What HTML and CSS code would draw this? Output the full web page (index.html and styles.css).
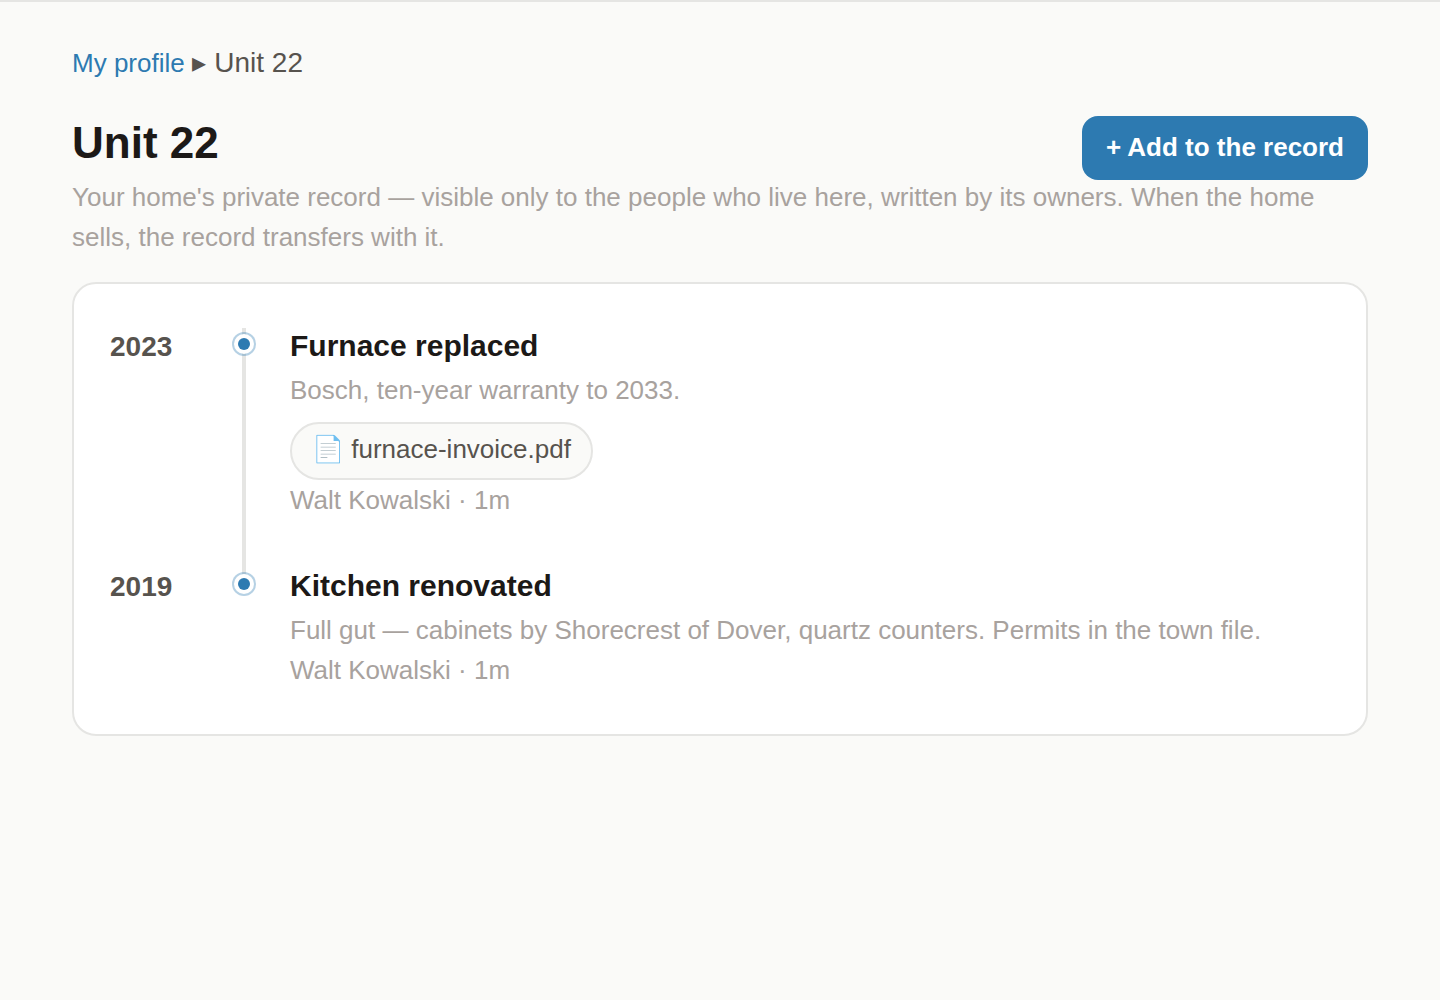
FILE: index.html
```html
<!DOCTYPE html>
<html lang="en">
<head>
    <meta charset="UTF-8">
    <meta name="viewport" content="width=device-width, initial-scale=1.0">
    <title>Unit 22</title>
    <link rel="stylesheet" href="styles.css">
</head>
<body>
    <main class="page">
        <nav class="breadcrumb" aria-label="Breadcrumb">
            <a href="#">My profile</a>
            <span>▸</span>
            <span>Unit 22</span>
        </nav>

        <header class="page-header">
            <h1>Unit 22</h1>
            <button type="button" class="add-button">+ Add to the record</button>
        </header>
        <p class="intro">Your home's private record — visible only to the people who live here, written by its owners. When the home sells, the record transfers with it.</p>

        <section class="card">
            <article class="entry">
                <div class="year">2023</div>
                <div class="rail"><span class="dot"></span></div>
                <div class="entry-body">
                    <h2>Furnace replaced</h2>
                    <p>Bosch, ten-year warranty to 2033.</p>
                    <a href="#" class="attachment">📄 furnace-invoice.pdf</a>
                    <p>Walt Kowalski · 1m</p>
                </div>
            </article>
            <article class="entry">
                <div class="year">2019</div>
                <div class="rail"><span class="dot"></span></div>
                <div class="entry-body">
                    <h2>Kitchen renovated</h2>
                    <p>Full gut — cabinets by Shorecrest of Dover, quartz counters. Permits in the town file.</p>
                    <p>Walt Kowalski · 1m</p>
                </div>
            </article>
        </section>
    </main>
</body>
</html>
```
FILE: styles.css
```css
* {
    box-sizing: border-box;
}
body {
    margin: 0;
    border-top: 2px solid #e5e5e3;
    background-color: #fafaf8;
    color: #57534e;
    font-family: "Liberation Sans", Arial, sans-serif;
    font-size: 28px;
}
h1, h2, p {
    margin: 0;
}
.page {
    padding: 40px 72px;
}
.breadcrumb {
    margin-bottom: 32px;
    line-height: 42px;
}
.breadcrumb a {
    color: #2d7ab1;
    font-size: 26px;
    text-decoration: none;
}
.page-header {
    display: flex;
    justify-content: space-between;
    align-items: flex-start;
}
h1 {
    color: #1c1917;
    font-size: 44px;
    line-height: 54px;
}
.add-button {
    height: 64px;
    padding: 0 24px 2px;
    border: none;
    border-radius: 16px;
    background-color: #2d7ab1;
    color: white;
    font-family: inherit;
    font-size: 26px;
    font-weight: bold;
    cursor: pointer;
}
.intro {
    margin: -3px 0 25px;
    color: #a8a29e;
    font-size: 26px;
    line-height: 40px;
}
.card {
    padding: 44px 36px;
    border: 2px solid #e5e5e3;
    border-radius: 24px;
    background-color: white;
}

/* Timeline */
.entry {
    display: grid;
    grid-template-columns: 122px 24px 1fr;
}
.year {
    font-weight: bold;
    line-height: 38px;
}
.rail {
    position: relative;
    padding-top: 4px;
}
.entry:not(:last-child) .rail::before {
    content: "";
    position: absolute;
    top: 0;
    bottom: -6px;
    left: 10px;
    width: 4px;
    background-color: #e5e5e3;
}
.dot {
    position: relative;
    display: block;
    width: 24px;
    height: 24px;
    padding: 4px;
    border: 2px solid rgba(45, 122, 177, 0.35);
    border-radius: 50%;
    background-color: white;
    background-clip: padding-box;
}
.dot::before {
    content: "";
    display: block;
    height: 12px;
    border-radius: 50%;
    background-color: #2d7ab1;
}
.entry-body {
    padding: 0 0 48px 34px;
    color: #a8a29e;
    font-size: 26px;
    line-height: 40px;
}
.entry:last-child .entry-body {
    padding-bottom: 0;
}
h2 {
    margin-bottom: 6px;
    color: #1c1917;
    font-size: 30px;
    line-height: 36px;
}
.attachment {
    display: block;
    width: fit-content;
    margin-top: 12px;
    padding: 5px 20px 9px;
    border: 2px solid #e5e5e3;
    border-radius: 29px;
    background-color: #fafaf8;
    color: #57534e;
    text-decoration: none;
}
```
